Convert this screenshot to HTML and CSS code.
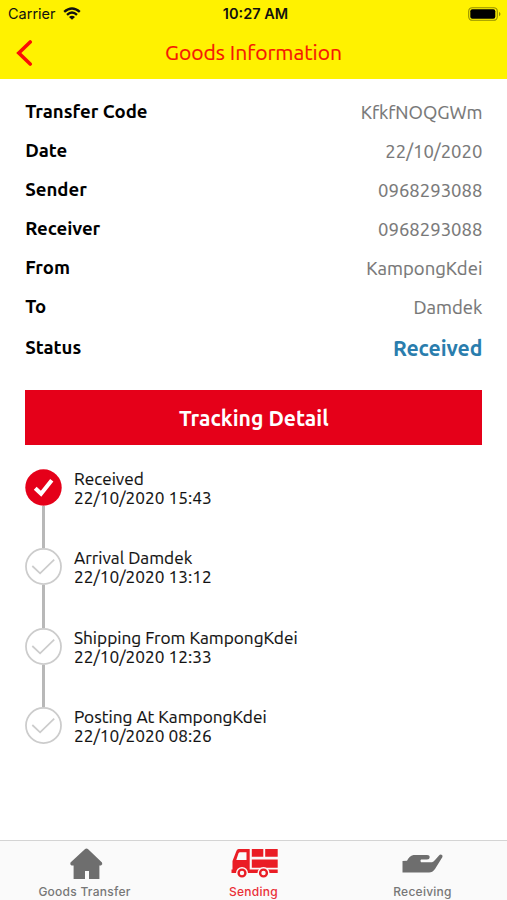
FILE: index.html
```html
<!DOCTYPE html>
<html lang="en">
<head>
<meta charset="utf-8">
<title>Goods Information</title>
<link rel="stylesheet" href="styles.css">
</head>
<body>
<div class="screen">
  <header class="header">
    <div class="statusbar">
      <div class="carrier"><span>Carrier</span>
        <svg class="wifi" width="18" height="13" viewBox="0 0 18 13"><path d="M1.2 4.8Q9-2 16.8 4.8M4 7.8Q9 3.4 14 7.8" fill="none" stroke="#111" stroke-width="2.4"/><path d="M6 9.9Q9 7.5 12 9.9L9 12.7Z" fill="#111"/></svg>
      </div>
      <span class="clock">10:27 AM</span>
      <svg class="battery" width="33" height="14" viewBox="0 0 33 14"><rect x=".7" y=".7" width="28.6" height="12.6" rx="3.6" fill="none" stroke="#948e00" stroke-width="1.1"/><rect x="2.3" y="2.3" width="25" height="9.4" rx="2" fill="#000"/><path d="M31 4.7q3 2.3 0 4.6z" fill="#948e00"/></svg>
    </div>
    <div class="navbar">
      <svg class="back" width="18" height="26" viewBox="0 0 18 26"><path d="M15.2 2L3.8 13L15.2 24" fill="none" stroke="#fa0f05" stroke-width="3.6" stroke-linecap="round"/></svg>
      <h1 class="title">Goods Information</h1>
    </div>
  </header>
  <main class="content">
    <dl class="info">
      <div class="row"><dt>Transfer Code</dt><dd>KfkfNOQGWm</dd></div>
      <div class="row"><dt>Date</dt><dd>22/10/2020</dd></div>
      <div class="row"><dt>Sender</dt><dd>0968293088</dd></div>
      <div class="row"><dt>Receiver</dt><dd>0968293088</dd></div>
      <div class="row"><dt>From</dt><dd>KampongKdei</dd></div>
      <div class="row"><dt>To</dt><dd>Damdek</dd></div>
      <div class="row status"><dt>Status</dt><dd>Received</dd></div>
    </dl>
    <div class="banner">Tracking Detail</div>
    <ol class="timeline">
      <li class="step done"><svg class="dot" viewBox="0 0 38 38"><circle cx="19" cy="19" r="18.7"/><path d="M10.5 19.8L16.5 25.5L27.5 11.5"/></svg><div><p>Received</p><p>22/10/2020 15:43</p></div></li>
      <li class="step"><svg class="dot" viewBox="0 0 38 38"><circle cx="19" cy="19" r="18"/><path d="M7.5 18.5L15.5 26L30 12"/></svg><div><p>Arrival Damdek</p><p>22/10/2020 13:12</p></div></li>
      <li class="step"><svg class="dot" viewBox="0 0 38 38"><circle cx="19" cy="19" r="18"/><path d="M7.5 18.5L15.5 26L30 12"/></svg><div><p>Shipping From KampongKdei</p><p>22/10/2020 12:33</p></div></li>
      <li class="step"><svg class="dot" viewBox="0 0 38 38"><circle cx="19" cy="19" r="18"/><path d="M7.5 18.5L15.5 26L30 12"/></svg><div><p>Posting At KampongKdei</p><p>22/10/2020 08:26</p></div></li>
    </ol>
  </main>
  <nav class="tabs">
    <div class="tab"><svg width="48" height="32" viewBox="0 0 48 32"><path d="M25.5.5q.8 0 1.4.6L41 14.6q1 2.200-1 2.900h-1.600V31H28v-8h-4v8H12.600V17.500H10.500q-2-.7-1-2.900L24.100 1.100q.6-.6 1.400-.6z" fill="#6e6e6e"/></svg><span>Goods Transfer</span></div>
    <div class="tab active"><svg width="48" height="32" viewBox="0 0 48 32"><path fill="#ea1d25" fill-rule="evenodd" d="M8.500 1H19.700V25H1.500V21.500H2.500V13L6 4Q6.800 1 8.500 1zM10 4.200Q9 4.200 8.500 5.200L6.300 12H16.500V4.200z"/><path fill="#ea1d25" d="M21.800 1h11.500v7.800H21.800zM35.200 1H47.700v7.800H35.200zM21.800 11.600h25.900v8.200H21.800zM19 21.400h28.700v3.600H19z"/><g fill="#fafafa"><circle cx="12" cy="25" r="6"/><circle cx="33.500" cy="25" r="6"/></g><g fill="#fafafa" stroke="#ea1d25" stroke-width="2.400"><circle cx="12" cy="25" r="3.400"/><circle cx="33.500" cy="25" r="3.400"/></g></svg><span>Sending</span></div>
    <div class="tab"><svg width="48" height="32" viewBox="0 0 48 32"><path d="M3.500 13L8 12.800q2-4.800 6.500-5.800h13.500q2.700 0 2.700 2.200t-2.700 2.300h-6q-1.200 1.300 0 2.700H33q1.500-.3 3-2.200l4-4.500q1-1.200 2.500-.8 1.800.7.800 2.600L36 21q-2.500 3.500-6 3.500H3.500z" fill="#6e6e6e"/></svg><span>Receiving</span></div>
  </nav>
</div>
</body>
</html>
```
FILE: styles.css
```css
* { box-sizing: border-box; margin: 0; padding: 0; }
body { background: #fff; font-family: Ubuntu, "Noto Sans", sans-serif; color: #111; }
.screen { width: 507px; height: 900px; display: flex; flex-direction: column; overflow: hidden; }
.header { height: 79px; background: #fff200; }
.statusbar { height: 27px; display: grid; grid-template-columns: 1fr auto 1fr; align-items: center; padding: 0 6px 0 8px; font: 14.5px/27px Inter, sans-serif; }
.carrier { display: flex; align-items: center; gap: 7px; }
.clock { font-weight: 600; margin-left: 2px; }
.battery { justify-self: end; }
.navbar { height: 52px; display: grid; grid-template-columns: 40px 1fr 40px; align-items: center; padding: 0 15px; }
.title { font-size: 21px; font-weight: 400; text-align: center; color: #f51505; line-height: 48px; padding-bottom: 2px; -webkit-text-stroke: .2px; }
.content { flex: 1; padding: 13.4px 24.6px 0 25.2px; }
.row { height: 39.1px; display: flex; justify-content: space-between; align-items: center; font-size: 18.6px; line-height: 40px; }
.row dt { font-weight: 700; color: #000; }
.row dd { color: #777; font-size: 18.5px; -webkit-text-stroke: .15px; }
.status { height: 43px; }
.status dd { font-size: 21.2px; font-weight: 700; color: #2a7dad; -webkit-text-stroke: 0; }
.banner { height: 55px; margin-top: 20px; background: #e50019; color: #fff; text-align: center; font-size: 21.15px; font-weight: 700; line-height: 56px; }
.timeline { list-style: none; margin-top: 24px; }
.step { display: grid; grid-template-columns: 37px 1fr; column-gap: 11.8px; height: 79.4px; font-size: 17.25px; line-height: 19px; align-content: start; background: linear-gradient(#b8b8b8, #b8b8b8) 17px 37px / 3px 43px no-repeat; -webkit-text-stroke: .15px; }
.step:last-child { background: none; }
.dot { width: 37px; height: 37px; fill: none; stroke: #ccc; stroke-width: 1.8; }
.done .dot circle { fill: #e50019; stroke: none; }
.done .dot path { stroke: #fff; stroke-width: 4.2; }
.tabs { height: 60px; border-top: 1px solid #d4d4d4; background: #fafafa; display: grid; grid-template-columns: repeat(3, 1fr); }
.tab { display: flex; flex-direction: column; align-items: center; padding-top: 7px; color: #777; font: 500 12px/14px Inter, sans-serif; letter-spacing: .25px; gap: 5px; }
.active { color: #ea3038; }
```
